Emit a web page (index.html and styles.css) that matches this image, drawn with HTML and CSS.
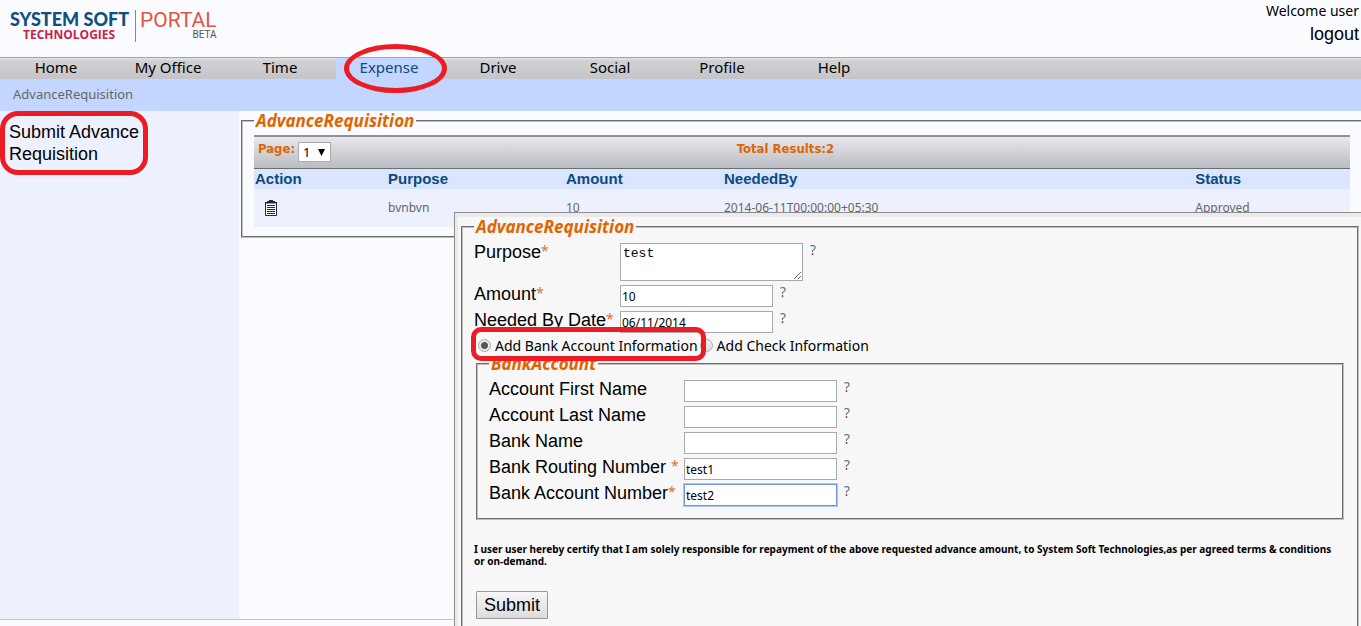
FILE: index.html
```html
<!DOCTYPE html>
<html lang="en">
<head>
<meta charset="utf-8">
<title>System Soft Portal - Advance Requisition</title>
<link rel="stylesheet" href="styles.css">
</head>
<body>
<header class="header">
  <div class="logo">
    <div class="brand"><span class="brand-main">SYSTEM SOFT</span><span class="brand-sub">TECHNOLOGIES</span></div>
    <div class="portal"><span class="portal-main">PORTAL</span><span class="portal-sub">BETA</span></div>
  </div>
  <div class="account"><span>Welcome user</span><a class="logout" href="#">logout</a></div>
</header>
<nav class="nav">
  <a href="#">Home</a><a href="#">My Office</a><a href="#">Time</a><a class="active" href="#">Expense</a><a href="#">Drive</a><a href="#">Social</a><a href="#">Profile</a><a href="#">Help</a>
</nav>
<div class="crumb"><a href="#">AdvanceRequisition</a></div>
<div class="layout">
  <aside class="sidebar"><a href="#">Submit Advance Requisition</a></aside>
  <main class="content">
    <fieldset class="list">
      <legend>AdvanceRequisition</legend>
      <div class="pager">
        <div class="page-pick"><label for="page">Page:</label>
          <span class="select-wrap"><select id="page"><option>1</option></select><svg width="7" height="7" viewBox="0 0 7 7"><path d="M0 0h7L3.500 7z"/></svg></span></div>
        <span>Total Results:2</span>
      </div>
      <table class="results">
        <colgroup><col class="c-action"><col class="c-purpose"><col class="c-amount"><col class="c-needed"><col></colgroup>
        <thead><tr><th>Action</th><th>Purpose</th><th>Amount</th><th>NeededBy</th><th>Status</th></tr></thead>
        <tbody><tr>
          <td><button class="icon-button" type="button" aria-label="Details"><svg width="12" height="16" viewBox="0 0 12 16"><path d="M4 0h4v1h2v2H2V1h2z" fill="#20284a"/><path d="M.5 3v12.500h11V3z" fill="#fff" stroke="#20284a"/><path d="M0 2.500h12M2 5.500h8M2 7.500h8M2 9.500h8M2 11.500h8M2 13.500h8" stroke="#20284a"/></svg></button></td>
          <td>bvnbvn</td><td>10</td><td>2014-06-11T00:00:00+05:30</td><td>Approved</td></tr></tbody>
      </table>
    </fieldset>
  </main>
</div>
<footer class="footer"></footer>

<form class="dialog">
  <div class="dialog-body">
  <fieldset class="request">
    <legend>AdvanceRequisition</legend>
    <div class="row row-tall"><label for="purpose">Purpose<i>*</i></label><textarea id="purpose">test</textarea><span class="help">?</span></div>
    <div class="row"><label for="amount">Amount<i>*</i></label><input id="amount" type="text" value="10"><span class="help">?</span></div>
    <div class="row"><label for="date">Needed By Date<i>*</i></label><input id="date" type="text" value="06/11/2014"><span class="help">?</span></div>
    <div class="methods">
      <label><input type="radio" name="method" checked>Add Bank Account Information</label>
      <label><input type="radio" name="method">Add Check Information</label>
    </div>
    <fieldset class="bank">
      <legend>BankAccount</legend>
      <div class="row"><label for="first">Account First Name</label><input id="first" type="text"><span class="help">?</span></div>
      <div class="row"><label for="last">Account Last Name</label><input id="last" type="text"><span class="help">?</span></div>
      <div class="row"><label for="bank">Bank Name</label><input id="bank" type="text"><span class="help">?</span></div>
      <div class="row"><label for="routing">Bank Routing Number <i>*</i></label><input id="routing" type="text" value="test1"><span class="help">?</span></div>
      <div class="row"><label for="number">Bank Account Number<i>*</i></label><input id="number" class="focused" type="text" value="test2"><span class="help">?</span></div>
    </fieldset>
    <p class="certify">I user user hereby certify that I am solely responsible for repayment of the above requested advance amount, to System Soft Technologies,as per agreed terms &amp; conditions or on-demand.</p>
    <button class="submit" type="button">Submit</button>
  </fieldset>
  </div>
</form>
<div class="mark mark-tab"></div>
<div class="mark mark-side"></div>
<div class="mark mark-method"></div>
</body>
</html>
```
FILE: styles.css
```css
* { box-sizing: border-box; }
body {
  margin: 0;
  min-height: 100vh;
  display: flex;
  flex-direction: column;
  position: relative;
  overflow: hidden;
  background: #fafbff;
  color: #000;
  font: 14px/18px "Noto Sans", sans-serif;
}
a { color: inherit; text-decoration: none; }
.header { display: flex; justify-content: space-between; height: 57px; padding: 2px 2px 0 10px; }
.logo { display: flex; height: 32px; margin-top: 8px; }
.brand, .portal { display: flex; flex-direction: column; }
.brand { padding-right: 6px; color: #0f5080; }
.brand-main { font: 900 18px/18px Lato, sans-serif; }
.brand-sub { padding-left: 13px; color: #c8234a; font: bold 12px/14px "Open Sans", sans-serif; }
.portal { padding-left: 4px; border-left: 1px solid #888; color: #e25443; }
.portal-main { font: 21px/20px Roboto, sans-serif; }
.portal-sub { color: #555; text-align: right; font: 10px/10px Roboto, sans-serif; }
.account { display: flex; flex-direction: column; align-items: flex-end; }
.logout { margin-top: 3px; font: 18px/22px "Liberation Sans", sans-serif; }
.nav {
  display: flex;
  height: 22px;
  border-top: 1px solid #a3a6aa;
  background: linear-gradient(#dddddf 0 2px, #d2d2d4 2px, #c5c4c8);
  font-size: 15px;
}
.nav a { width: 112px; text-align: center; }
.nav .active { width: 106px; background: #c3d6ff; color: #0c4a80; }
.crumb { height: 32px; padding: 6px 13px; background: #c3d6ff; color: #666; font-size: 13px; }
.layout { flex: 1; display: grid; grid-template-columns: 239px 1fr; }
.sidebar { padding: 10px 90px 0 9px; background: #edf1fd; font: 18px/22px "Liberation Sans", sans-serif; }
.footer { height: 7px; border-top: 1px solid #c5c6cb; }

fieldset { min-width: 0; margin: 0; border: 2px groove #c0c0c0; }
legend { color: #e06500; font: italic bold 17px/20px "Noto Sans", sans-serif; padding: 0 2px; }
.list { margin: 0 0 0 2px; padding: 4px 11px 9px; border-right: 0; }
.pager {
  display: grid;
  grid-template-columns: 44% 1fr;
  height: 34px;
  padding: 2px 4px;
  border-top: 2px solid #909095;
  border-bottom: 1px solid #6d6e72;
  background: linear-gradient(#e7e8ed, #bbbcc2);
  color: #e06500;
  font: bold 13px/20px "DejaVu Sans Condensed", "DejaVu Sans", sans-serif;
}
.page-pick { display: flex; gap: 3px; }
.select-wrap { position: relative; height: 20px; margin-top: 3px; }
.select-wrap select {
  appearance: none;
  width: 33px;
  height: 20px;
  padding: 0 4px;
  border: 1px solid #aaa;
  border-radius: 0;
  background: #fff;
  color: #000;
  font: 13px "Noto Sans", sans-serif;
}
.select-wrap svg { position: absolute; right: 6px; top: 7px; pointer-events: none; }
.results { width: 100%; border-collapse: collapse; table-layout: fixed; }
.c-action { width: 133px; }
.c-purpose { width: 178px; }
.c-amount { width: 158px; }
.c-needed { width: 43%; }
.results th { height: 20px; padding: 0 1px; background: #dae5ff; color: #0c4a80; text-align: left; font: bold 15px/20px "Liberation Sans", sans-serif; }
.results td { height: 38px; padding: 0 1px; background: #edf1fd; color: #666; font-size: 12px; }
.icon-button { display: block; margin-left: 10px; padding: 0; border: 0; background: none; }
.icon-button svg { display: block; }

.dialog {
  position: absolute;
  top: 212px;
  right: 0;
  bottom: 0;
  left: 454px;
  overflow: hidden;
  border: solid #8d8d8d;
  border-width: 1px 0 0 1px;
  background: #ebebeb;
  padding: 4px 0 0 3px;
}
.dialog-body { min-height: 100%; padding: 0 2px 0 3px; background: #f7f7f7; }
.request { padding: 6px 13px 60px 11px; }
.row { display: flex; align-items: flex-start; height: 26px; }
.row label { flex: none; width: 146px; font: 18px/18px "Liberation Sans", sans-serif; white-space: pre; }
.row i { color: #e2702a; vertical-align: top; font: 14px/16px "Noto Sans", sans-serif; }
.help {
  margin-left: 7px;
  background: linear-gradient(#56648f 9px, #d01c3c 9px);
  background-clip: text;
  color: transparent;
  font: 14px/13px "Noto Sans", sans-serif;
}
.row-tall { height: 42px; }
.row input, .row textarea { margin: 0; border: 1px solid #a9a9a9; border-radius: 0; background: #fff; color: #000; outline: 0; }
.row input { width: 153px; height: 22px; padding: 1px; font: 12px "Noto Sans", sans-serif; }
.row textarea { width: 183px; height: 38px; padding: 2px; font: 13px "Liberation Mono", monospace; }
.row .focused { border-color: #6f94dc; box-shadow: 0 0 0 1px #a9c5fa; }
.methods { display: flex; gap: 2px; height: 17px; padding-left: 4px; }
.methods label { display: flex; align-items: center; gap: 4px; }
.methods input {
  appearance: none;
  width: 13px;
  height: 13px;
  margin: 0;
  border: 1px solid #aaa;
  border-radius: 50%;
  background: linear-gradient(#eee, #ddd);
}
.methods input:checked { background: radial-gradient(circle, #555 3px, #e8e8e8 4px); }
.bank { margin: 0 0 0 2px; padding: 6px 11px 8px; }
.bank .row label { width: 195px; }
.certify { margin: 23px 0 24px; font: bold 10px/12px "Noto Sans", sans-serif; }
.submit {
  margin-left: 2px;
  height: 28px;
  padding: 0 7px;
  border: 1px solid #999;
  border-radius: 1px;
  background: linear-gradient(#f6f6f6, #dcdcdc);
  color: #000;
  font: 18px "Liberation Sans", sans-serif;
}

.mark { position: absolute; border: 5px solid #ed1c24; pointer-events: none; }
.mark-tab { left: 344px; top: 44px; width: 103px; height: 49px; border-radius: 50%; }
.mark-side { left: 0; top: 111px; width: 148px; height: 64px; border-radius: 18px; }
.mark-method { left: 471px; top: 327px; width: 235px; height: 34px; border-radius: 10px; }
```
